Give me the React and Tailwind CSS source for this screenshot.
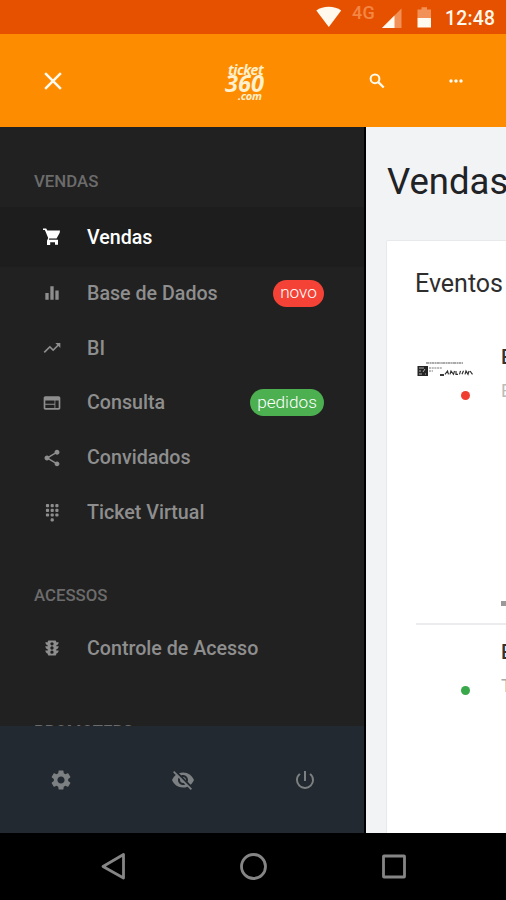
import {
  MdClose, MdMoreHoriz, MdEqualizer, MdTrendingUp, MdWeb,
  MdShare, MdTraffic, MdSettings, MdVisibilityOff, MdPowerSettingsNew,
} from "react-icons/md";

function CartIcon({ className }) {
  return (
    <svg className={className} viewBox="0 0 20 20" fill="currentColor">
      <path d="M1 1.5h3.2l1.1 2H18l-.3 2.2-3 5.6H7.6l-.8 1.5H16v5h-3v-2.5H8.2V18H5v-4.2l1.2-2.7L3.5 4.4 2.8 3H1z" />
      <path d="M7.5 11.6h7" stroke="#888" strokeWidth="1.2" />
    </svg>
  );
}

function SearchIcon({ className }) {
  return (
    <svg className={className} viewBox="0 0 20 20" fill="none" stroke="currentColor" strokeWidth="2">
      <circle cx="8" cy="7.8" r="4.4" />
      <path d="M11.3 11.1l5.4 5.4" strokeWidth="2.3" />
    </svg>
  );
}

function DialpadIcon({ className }) {
  return (
    <svg className={className} viewBox="0 0 20 20" fill="currentColor">
      {[1, 5.7, 10.4].map((y) => [3.9, 8.6, 13.3].map((x) => <rect key={`${x}-${y}`} x={x} y={y} width="3.2" height="3.2" rx="1" />))}
      <rect x="8.6" y="15.2" width="3.2" height="3.2" rx="1.2" />
    </svg>
  );
}

function StatusBar() {
  return (
    <div className="flex h-[34px] shrink-0 items-center bg-[#e65100] text-[#fff8ec]">
      <svg className="ml-[316px] h-[34px] w-[26px] shrink-0" viewBox="0 0 26 34" fill="currentColor">
        <path d="M0.3 10.6C7 5.6 18.5 5.6 25.2 10.6L12.8 27Z" />
      </svg>
      <span className="ml-[10px] w-[24px] shrink-0 pb-[9px] text-[18px] font-medium leading-none tracking-[0.3px] text-[#f48644]">4G</span>
      <svg className="ml-[6px] h-[34px] w-[20px] shrink-0" viewBox="0 0 20 34">
        <path d="M0 28L19.5 8.5V28Z" fill="#f29157" />
        <path d="M0 28L12.5 15.5V28Z" fill="#fffaf0" />
      </svg>
      <svg className="ml-[15px] h-[34px] w-[15px] shrink-0" viewBox="0 0 15 34">
        <path d="M0.5 9.5h4V7.2h5.5v2.3h4V18H0.5z" fill="#f29157" />
        <path d="M0.5 18H14v9.5H0.5z" fill="#fffaf0" />
      </svg>
      <span className="ml-[13px] whitespace-nowrap pt-[3px] text-[19.3px] font-medium leading-none tracking-[0.25px]">12:48</span>
    </div>
  );
}

function Header() {
  return (
    <header className="flex h-[93px] shrink-0 items-center bg-[#fd8c00] text-[#fffaf0]">
      <MdClose className="ml-[38px] size-[30px] shrink-0" />
      <div className="ml-[157px] flex w-[44px] shrink-0 flex-col pt-[2px] font-['Open_Sans',sans-serif] font-bold italic text-[#fff0ce]">
        <span className="pl-[3px] text-[14px] leading-[10px] tracking-[-0.5px]">ticket</span>
        <span className="text-[23.5px] leading-[17px]">360</span>
        <span className="pl-[13px] text-[11px] leading-[7px] tracking-[-0.3px]">.com</span>
      </div>
      <SearchIcon className="ml-[98px] size-[20px] shrink-0" />
      <MdMoreHoriz className="ml-[59px] size-[20px] shrink-0" />
    </header>
  );
}

function Heading({ children }) {
  return <h2 className="h-[20px] pl-[34px] text-[16.8px] font-medium leading-[20px] text-[#6c6c6c]">{children}</h2>;
}

function Item({ icon: Icon, label, active, badge, badgeClass }) {
  return (
    <div className={`flex shrink-0 items-center pl-[42px] pr-[40px] ${active ? "h-[60px] bg-[#1d1d1d] text-white" : "h-[54.8px] text-[#8e8e8e]"}`}>
      <Icon className="size-[20px] shrink-0" />
      <span className="ml-[25px] flex-1 whitespace-nowrap pt-[1px] text-[19.65px] font-medium leading-[20px]">{label}</span>
      {badge && <span className={`flex h-[27px] items-center justify-center rounded-full text-[17.2px] font-light text-white ${badgeClass}`}>{badge}</span>}
    </div>
  );
}

function Sidebar() {
  return (
    <aside className="flex w-[366px] shrink-0 flex-col border-r-2 border-black bg-[#212121]">
      <nav className="flex h-[599px] flex-col overflow-hidden pt-[44px]">
        <Heading>VENDAS</Heading>
        <div className="mt-[16px]">
          <Item icon={CartIcon} label="Vendas" active />
          <div className="-mt-[1px]">
            <Item icon={MdEqualizer} label="Base de Dados" badge="novo" badgeClass="w-[51px] bg-[#f44336]" />
            <Item icon={MdTrendingUp} label="BI" />
            <Item icon={MdWeb} label="Consulta" badge="pedidos" badgeClass="w-[74px] bg-[#4caf50]" />
            <Item icon={MdShare} label="Convidados" />
            <Item icon={DialpadIcon} label="Ticket Virtual" />
          </div>
        </div>
        <div className="mt-[45px]"><Heading>ACESSOS</Heading></div>
        <div className="mt-[16px]"><Item icon={MdTraffic} label="Controle de Acesso" /></div>
        <div className="mt-[45px]"><Heading>PROMOTERS</Heading></div>
      </nav>
      <div className="flex flex-1 items-center bg-[#222930] text-[#7d8082]">
        <MdSettings className="ml-[49px] size-[24px]" />
        <MdVisibilityOff className="ml-[98px] size-[24px]" />
        <MdPowerSettingsNew className="ml-[98px] size-[24px]" />
      </div>
    </aside>
  );
}

function EventLogo() {
  return (
    <svg className="h-[20px] w-[58px]" viewBox="0 0 58 20">
      <rect x="1.5" y="7" width="10.5" height="10" fill="#252525" />
      <path d="M3 9h5M3 12h2M7 13l2-3M3 15h3M9 15h1" stroke="#b0b0b0" strokeWidth="1" />
      <path d="M10 4h37" stroke="#aaa" strokeWidth="2" strokeDasharray="3 .5 1.5 .4" />
      <path d="M13 9h13M13 12h4" stroke="#bbb" strokeWidth="1.8" strokeDasharray="2 .7" />
      <path d="M24 16h4" stroke="#222" strokeWidth="1.8" />
      <path d="M29 15.3l2.5-3.3 1 3.3M34 15.3l1-3.3 2.5 3.3 1-3.3M40 12v3.3h2M43.5 15.3l1-3.5M46 15.3l1.5-3.5M49 15.3l1-3.3 2 3.3 1-3.3M54 12l2.5 3.3" fill="none" stroke="#333" strokeWidth="1.2" />
    </svg>
  );
}

function Content() {
  return (
    <main className="flex w-[140px] shrink-0 flex-col overflow-hidden bg-[#f2f3f5] pl-[20px]">
      <h1 className="mt-[33px] h-[44px] pl-[1px] text-[36.5px] leading-[44px] text-[#202225]">Vendas</h1>
      <section className="mt-[36px] flex w-[300px] flex-1 flex-col rounded-tl-[2px] border-l border-t border-[#e8e9eb] bg-white pl-[28px]">
        <h2 className="mt-[26px] h-[33px] text-[25px] leading-[33px] text-[#2e2e2e]">Eventos</h2>
        <div className="ml-[1px] flex h-[325px] border-b-2 border-[#ececee]">
          <div className="w-[85px] pt-[59px]">
            <EventLogo />
            <div className="ml-[45px] mt-[12px] size-[9px] rounded-full bg-[#ef3e30]" />
          </div>
          <div className="pt-[46px]">
            <p className="h-[22px] text-[20px] font-medium leading-[22px] text-[#333]">Evento</p>
            <p className="mt-[12px] h-[22px] text-[18px] leading-[22px] text-[#bbb]">Evento</p>
            <div className="mt-[199px] h-[5px] w-[30px] bg-[#999]" />
          </div>
        </div>
        <div className="ml-[1px] flex">
          <div className="w-[85px] pt-[61px]">
            <div className="ml-[45px] size-[9px] rounded-full bg-[#38a84a]" />
          </div>
          <div className="pt-[16px]">
            <p className="h-[22px] text-[20px] font-medium leading-[22px] text-[#333]">Evento</p>
            <p className="mt-[12px] h-[22px] text-[18px] leading-[22px] text-[#aaa]">Ticket</p>
          </div>
        </div>
      </section>
    </main>
  );
}

function NavigationBar() {
  return (
    <div className="flex h-[67px] shrink-0 items-center bg-black">
      <svg className="h-[67px] w-[506px]" viewBox="0 0 506 67" fill="none" stroke="#858585" strokeWidth="2.8">
        <path d="M123.5 21.5v23.5l-20.5-11.5z" strokeLinejoin="round" />
        <circle cx="253.5" cy="33.5" r="12" />
        <rect x="383.5" y="23" width="21" height="21" rx="0.5" />
      </svg>
    </div>
  );
}

export default function App() {
  return (
    <div className="flex h-[900px] w-[506px] flex-col overflow-hidden font-[Roboto,sans-serif]">
      <StatusBar />
      <Header />
      <div className="flex h-[706px] shrink-0 overflow-hidden">
        <Sidebar />
        <Content />
      </div>
      <NavigationBar />
    </div>
  );
}
